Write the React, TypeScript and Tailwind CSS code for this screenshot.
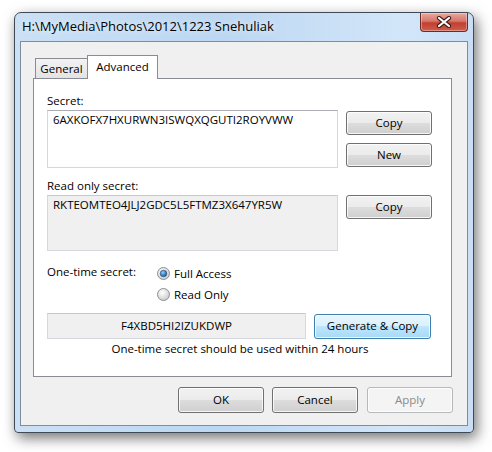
import type { ReactNode } from 'react'

const font = "font-['Open_Sans','Noto_Sans',sans-serif]"

function Button({ children, kind = 'normal', className = '' }: { children: ReactNode; kind?: 'normal' | 'default' | 'disabled'; className?: string }) {
  const look =
    kind === 'default'
      ? 'border-[#3c7fb1] bg-[linear-gradient(#eaf6fd_0%,#d9f0fc_50%,#bee6fd_50%,#a7d9f5_100%)] text-black'
      : kind === 'disabled'
        ? 'border-[#b5b9bc] bg-[#f4f4f4] text-[#8a8a8a]'
        : 'border-[#707070] bg-[linear-gradient(#f2f2f2_0%,#ebebeb_50%,#dddddd_50%,#cfcfcf_100%)] text-black'
  return (
    <div
      className={`flex items-center justify-center rounded-[3px] border shadow-[inset_0_0_0_1px_rgba(255,255,255,0.8)] text-[11.5px] leading-none ${look} ${className}`}
    >
      {children}
    </div>
  )
}

function Radio({ checked }: { checked?: boolean }) {
  return (
    <svg width="13" height="13" viewBox="0 0 13 13">
      <defs>
        <radialGradient id={checked ? 'rgOn' : 'rgOff'} cx="40%" cy="35%" r="70%">
          <stop offset="0%" stopColor="#ffffff" />
          <stop offset="100%" stopColor="#c9c9c9" />
        </radialGradient>
        <radialGradient id="dot" cx="40%" cy="35%" r="70%">
          <stop offset="0%" stopColor="#8fd0ff" />
          <stop offset="100%" stopColor="#0b4b8f" />
        </radialGradient>
      </defs>
      <circle cx="6.5" cy="6.5" r="6" fill={`url(#${checked ? 'rgOn' : 'rgOff'})`} stroke="#8e8f8f" />
      {checked && <circle cx="6.5" cy="6.5" r="3.3" fill="url(#dot)" stroke="#1d5283" strokeWidth="0.6" />}
    </svg>
  )
}

export default function App() {
  return (
    <div className={`w-[492px] h-[452px] bg-white pl-[14px] pt-[12px] ${font}`}>
      {/* Window frame */}
      <div className="relative flex h-[421px] w-[460px] flex-col rounded-t-[7px] rounded-b-[4px] border border-[#3f4a56] bg-[linear-gradient(90deg,#cbe0f5_0%,#bcd7f2_45%,#d3e6f9_85%,#c9def4_100%)] px-[5px] pb-[6px] shadow-[3px_5px_14px_rgba(0,0,0,0.55)]">
        {/* Title bar */}
        <div className="flex h-[28px] items-center pl-[2px] pb-[1px] text-[13px] text-black [text-shadow:0_0_6px_#ffffff]">
          H:\MyMedia\Photos\2012\1223 Snehuliak
        </div>
        <div className="absolute right-[5px] top-0 flex h-[19px] w-[48px] items-center justify-center rounded-b-[4px] border border-t-0 border-[#6b2c26] bg-[linear-gradient(#e9a99f_0%,#d6766a_45%,#c2402f_55%,#cf5c4c_100%)] shadow-[inset_0_0_0_1px_rgba(255,255,255,0.35)]">
          <svg width="16" height="12" viewBox="0 0 16 12">
            <path d="M3 2 L13 10 M13 2 L3 10" stroke="#3b1a17" strokeWidth="4.2" strokeLinecap="round" />
            <path d="M3 2 L13 10 M13 2 L3 10" stroke="#ffffff" strokeWidth="2.2" strokeLinecap="round" />
          </svg>
        </div>

        {/* Client area */}
        <div className="flex flex-1 flex-col border border-[#7f8c99] bg-[#f0f0f0] pl-[12px] pr-[15px] pt-[13px] text-[11.5px] text-black">
          {/* Tabs */}
          <div className="flex h-[23px] items-end pl-[2px]">
            <div className="flex h-[20px] w-[53px] items-center justify-center border border-b-0 border-[#898c95] bg-[linear-gradient(#f3f3f3,#e3e3e3)] pt-[1px]">
              General
            </div>
            <div className="relative z-10 -mb-[1px] -ml-[1px] flex h-[24px] w-[71px] items-start justify-center border border-b-0 border-[#898c95] bg-white pt-[2px]">
              Advanced
            </div>
          </div>

          {/* Tab panel */}
          <div className="flex h-[299px] flex-col border border-[#898c95] bg-white pl-[13px] pr-[18px] pt-[14px]">
            <div className="h-[16px] leading-[16px]">Secret:</div>
            <div className="mt-[1px] flex">
              <div className="h-[58px] w-[291px] border border-[#d5d8de] border-t-[#abadb3] bg-white px-[5px] pt-[1px] leading-[16px]">
                6AXKOFX7HXURWN3ISWQXQGUTI2ROYVWW
              </div>
              <div className="ml-[8px] flex flex-col gap-[8px] pt-[1px]">
                <Button className="h-[24px] w-[86px]">Copy</Button>
                <Button className="h-[24px] w-[86px]">New</Button>
              </div>
            </div>

            <div className="mt-[10px] h-[16px] leading-[16px]">Read only secret:</div>
            <div className="mt-[1px] flex">
              <div className="h-[56px] w-[291px] border border-[#d5d8de] border-t-[#c6c8cc] bg-[#f0f0f0] px-[5px] pt-[1px] leading-[16px]">
                RKTEOMTEO4JLJ2GDC5L5FTMZ3X647YR5W
              </div>
              <div className="ml-[8px]">
                <Button className="h-[24px] w-[86px]">Copy</Button>
              </div>
            </div>

            <div className="mt-[12px] flex">
              <div className="w-[110px] pt-[1px] leading-[16px]">One-time secret:</div>
              <div className="flex flex-col">
                <div className="flex h-[21px] items-center gap-[4px]">
                  <Radio checked />
                  <span>Full Access</span>
                </div>
                <div className="flex h-[21px] items-center gap-[4px]">
                  <Radio />
                  <span>Read Only</span>
                </div>
              </div>
            </div>

            <div className="mt-[8px] flex items-center">
              <div className="flex h-[26px] w-[259px] items-center justify-center border border-[#d5d8de] border-t-[#c6c8cc] bg-[#f0f0f0]">
                F4XBD5HI2IZUKDWP
              </div>
              <Button kind="default" className="ml-[8px] h-[25px] w-[117px]">
                Generate &amp; Copy
              </Button>
            </div>
            <div className="mt-[2px] text-center leading-[16px]">One-time secret should be used within 24 hours</div>
          </div>

          {/* Dialog buttons */}
          <div className="-mr-[1px] mt-[10px] flex justify-end gap-[8px]">
            <Button className="h-[26px] w-[86px]">OK</Button>
            <Button className="h-[26px] w-[86px]">Cancel</Button>
            <Button kind="disabled" className="ml-[1px] h-[26px] w-[86px]">
              Apply
            </Button>
          </div>
        </div>
      </div>
    </div>
  )
}
